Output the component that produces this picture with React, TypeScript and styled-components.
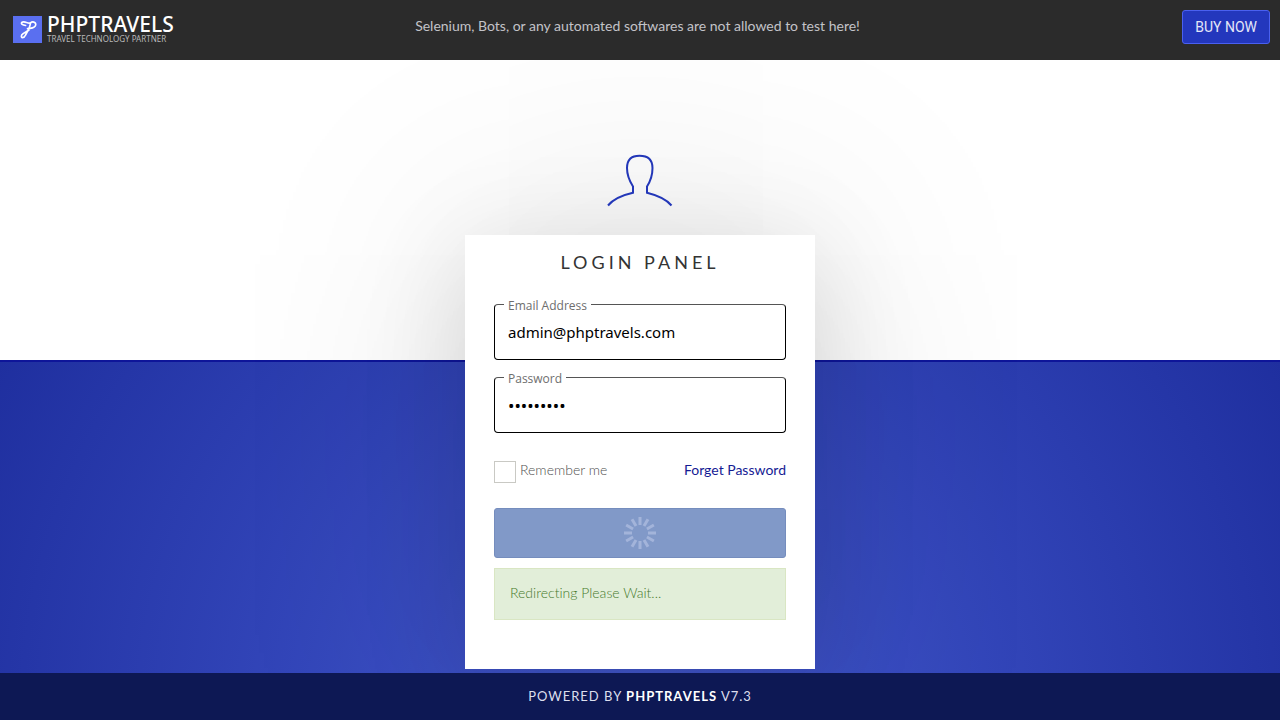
import React from "react";
import styled, { createGlobalStyle } from "styled-components";

const GlobalStyle = createGlobalStyle`
  *, *::before, *::after { box-sizing: border-box; }
  body { margin: 0; font-family: "Open Sans", "Noto Sans", sans-serif; }
`;

const Page = styled.div`
  min-height: 100vh;
  display: flex;
  flex-direction: column;
  background:
    linear-gradient(#0e1599, #0e1599) 0 50vh / 100% 2px no-repeat,
    linear-gradient(#fff, #fff) 0 0 / 100% 50vh no-repeat,
    radial-gradient(circle farthest-corner at 50% 100%, #455bd2, #1f2f9f) 0 100% / 100% 50vh no-repeat,
    #1f2f9f;
`;

const TopBar = styled.header`
  display: grid;
  grid-template-columns: 1fr auto 1fr;
  align-items: start;
  height: 60px;
  padding: 10px 10px 0 13px;
  background: #2b2b2b;
  position: relative;
`;

const Brand = styled.a`
  display: flex;
  align-items: center;
  gap: 5px;
  padding-top: 5px;
  color: #fff;
  text-decoration: none;
`;

const BrandText = styled.span`
  display: flex;
  flex-direction: column;
`;

const BrandName = styled.span`
  font: 500 21px/19px "Noto Sans", sans-serif;
`;

const Tagline = styled.span`
  font: 400 8px/10px "Noto Sans", sans-serif;
  color: #b8b8b8;
`;

const Notice = styled.p`
  margin: 0;
  padding: 6px 8px 0 0;
  font: 400 14px/20px Lato, sans-serif;
  color: #c3c3c8;
`;

const BuyButton = styled.button`
  justify-self: end;
  height: 34px;
  padding: 0 12px;
  border: 1px solid #4a60f0;
  border-radius: 3px;
  background: #2337bd;
  color: #e4e6f7;
  font: 400 14px/20px Roboto, sans-serif;
`;

const Main = styled.main`
  flex: 1;
  display: flex;
  flex-direction: column;
  align-items: center;
  padding: 88px 16px 4px;
`;

const UserIcon = styled.svg`
  width: 70px;
  height: 64px;
  margin-bottom: 23px;
  position: relative;
  z-index: 1;
`;

const Card = styled.form`
  width: 100%;
  max-width: 350px;
  padding: 14px 29px 49px;
  background: #fff;
  box-shadow:
    0 0 260px rgba(0, 0, 0, 0.14),
    0 20px 100px rgba(0, 0, 0, 0.14);
`;

const Title = styled.h1`
  margin: 0 0 29px;
  text-align: center;
  font: 400 18px/26px Lato, sans-serif;
  letter-spacing: 4px;
  color: #333;
`;

const Field = styled.div`
  position: relative;
  margin-bottom: 17px;
`;

const FieldLabel = styled.label`
  position: absolute;
  left: 10px;
  top: -6px;
  padding: 0 4px;
  background: #fff;
  font: 400 12px/16px "Open Sans", sans-serif;
  color: #6e6e6e;
`;

const FieldInput = styled.input<{ $size: number }>`
  display: block;
  width: 100%;
  height: 56px;
  padding: 0 13px;
  border: 1px solid #000;
  border-top-color: #555;
  border-radius: 4px;
  background: #fff;
  font: 400 ${(p) => p.$size}px/24px "Noto Sans", sans-serif;
  color: #000;
  outline: none;
`;

const Options = styled.div`
  display: flex;
  justify-content: space-between;
  align-items: flex-start;
  margin: 28px 0 25px;
  font: 400 14px/18px Lato, sans-serif;
`;

const Remember = styled.label`
  display: flex;
  gap: 4px;
  color: #505050;
  font-weight: 300;
`;

const Checkbox = styled.input`
  appearance: none;
  width: 22px;
  height: 22px;
  margin: 0;
  border: 1px solid #c9c9c4;
  background: #fff;
`;

const ForgetLink = styled.a`
  color: #151b94;
  text-decoration: none;
`;

const SubmitButton = styled.button`
  display: flex;
  align-items: center;
  justify-content: center;
  width: 100%;
  height: 50px;
  margin-bottom: 10px;
  padding: 0;
  border: 1px solid #758dbd;
  border-radius: 3px;
  background: #8199c8;
`;

const Alert = styled.div`
  padding: 14px 15px 16px;
  border: 1px solid #d9e6c3;
  background: #e2eed9;
  color: #477a2c;
  font: 300 14px/20px Lato, sans-serif;
  font-variant-ligatures: none;
`;

const Footer = styled.footer`
  height: 47px;
  padding-top: 14px;
  background: #0d1854;
  position: relative;
  text-align: center;
  font: 400 13px/18px Lato, sans-serif;
  letter-spacing: 1px;
  color: #dcdfee;

  strong { color: #fff; }
`;

const SPOKES = Array.from({ length: 12 }, (_, i) => i * 30);

export default function App() {
  return (
    <Page>
      <GlobalStyle />
      <TopBar>
        <Brand href="#">
          <svg width="29" height="27" viewBox="0 0 30 27" preserveAspectRatio="none" aria-hidden="true">
            <rect width="30" height="27" fill="#5a6ff0" />
            <path d="M13 9.500C10 9 8 8 9 6.500C12 4.500 15 8 18 7C21 4.500 25 7 23 10C21.500 12 18 12.500 15 12.500M18 7C18 11 15 15 13 19C11.500 22.500 7.500 22.500 9 19C10.500 16.500 14 16 16.500 14" fill="none" stroke="#fff" strokeWidth="1.700" strokeLinecap="round" />
          </svg>
          <BrandText>
            <BrandName>PHPTRAVELS</BrandName>
            <Tagline>TRAVEL TECHNOLOGY PARTNER</Tagline>
          </BrandText>
        </Brand>
        <Notice>Selenium, Bots, or any automated softwares are not allowed to test here!</Notice>
        <BuyButton type="button">BUY NOW</BuyButton>
      </TopBar>
      <Main>
        <UserIcon viewBox="0 0 70 64" aria-hidden="true">
          <path d="M3 57.500C9 50.500 18 47 28 44.800V38.500C23.500 31.500 22 25 22 20C22 11.500 26.500 7.700 34.500 7.700S47.500 11.500 47.500 20C47.500 25 46.500 31.500 42 38.500V44.800C51 47 60.500 50.500 66.500 57.500" fill="none" stroke="#2337b8" strokeWidth="2" />
        </UserIcon>
        <Card onSubmit={(e) => e.preventDefault()}>
          <Title>LOGIN PANEL</Title>
          <Field>
            <FieldInput $size={15} id="email" type="email" defaultValue="admin@phptravels.com" />
            <FieldLabel htmlFor="email">Email Address</FieldLabel>
          </Field>
          <Field>
            <FieldInput $size={17} id="password" type="password" defaultValue="demoadmin" />
            <FieldLabel htmlFor="password">Password</FieldLabel>
          </Field>
          <Options>
            <Remember>
              <Checkbox type="checkbox" />
              Remember me
            </Remember>
            <ForgetLink href="#">Forget Password</ForgetLink>
          </Options>
          <SubmitButton type="submit" aria-label="Logging in">
            <svg width="32" height="32" viewBox="0 0 32 32" aria-hidden="true">
              {SPOKES.map((angle) => (
                <path key={angle} d="M16 0v8" stroke="#a3b4da" strokeWidth="3" transform={`rotate(${angle} 16 16)`} />
              ))}
            </svg>
          </SubmitButton>
          <Alert role="status">Redirecting Please Wait...</Alert>
        </Card>
      </Main>
      <Footer>
        POWERED BY <strong>PHPTRAVELS</strong> V7.3
      </Footer>
    </Page>
  );
}
